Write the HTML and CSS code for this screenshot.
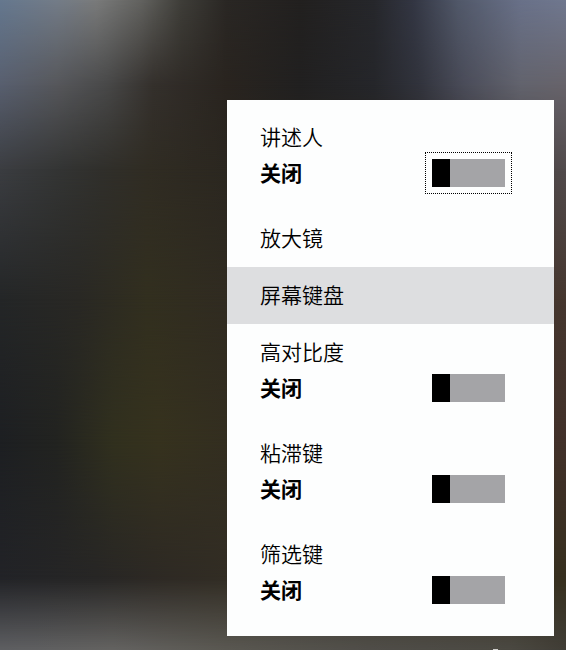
FILE: index.html
```html
<!DOCTYPE html>
<html lang="zh-CN">
<head>
<meta charset="utf-8">
<meta name="viewport" content="width=device-width, initial-scale=1">
<title>轻松使用</title>
<link rel="stylesheet" href="styles.css">
</head>
<body>
<div class="wallpaper" aria-hidden="true">
  <div class="band band-1"></div>
  <div class="band band-2"></div>
  <div class="band band-3"></div>
  <div class="band band-4"></div>
  <div class="band band-5"></div>
  <div class="band band-6"></div>
  <div class="band band-7"></div>
  <div class="glint"></div>
</div>
<main class="panel">
  <div class="option">
    <label class="name" for="narrator">讲述人</label>
    <span class="state">关闭</span>
    <span class="switch-box focused"><input class="switch" type="checkbox" role="switch" id="narrator"></span>
  </div>
  <button class="action" type="button">放大镜</button>
  <button class="action selected" type="button">屏幕键盘</button>
  <div class="option">
    <label class="name" for="contrast">高对比度</label>
    <span class="state">关闭</span>
    <span class="switch-box"><input class="switch" type="checkbox" role="switch" id="contrast"></span>
  </div>
  <div class="option">
    <label class="name" for="sticky">粘滞键</label>
    <span class="state">关闭</span>
    <span class="switch-box"><input class="switch" type="checkbox" role="switch" id="sticky"></span>
  </div>
  <div class="option">
    <label class="name" for="filter">筛选键</label>
    <span class="state">关闭</span>
    <span class="switch-box"><input class="switch" type="checkbox" role="switch" id="filter"></span>
  </div>
</main>
</body>
</html>
```
FILE: styles.css
```css
* {
  box-sizing: border-box;
}

body {
  margin: 0;
  padding: 100px 12px 14px;
  background: #2a2723;
  color: #000;
  font-family: "Noto Sans CJK SC", sans-serif;
  font-size: 21px;
  line-height: 36px;
}

/* Wallpaper: each band fades in over the one above it */
.wallpaper {
  position: fixed;
  inset: 0;
  z-index: -1;
  overflow: hidden;
}

.band {
  position: absolute;
  inset: 0;
}

.band-1 {
  background: linear-gradient(90deg, #65788f 0%, #737c88 10%, #7a7b7b 17%, #62625f 25%, #3f3e39 32%, #2a2724 40%, #22201f 53%, #26272b 66%, #333643 73%, #515869 81%, #697189 92%, #70788f 100%);
}

.band-2 {
  background: linear-gradient(90deg, #585f6f 0%, #56575b 10%, #484848 19%, #34302c 27%, #29241f 40%, #212020 53%, #25262a 66%, #31333c 74%, #4a4c59 82%, #62636d 92%, #67636a 100%);
  mask-image: linear-gradient(transparent 0%, #000 13%);
}

.band-3 {
  background: linear-gradient(90deg, #3b3d41 0%, #333433 11%, #302f2b 18%, #302c23 26%, #2b2720 40%, #28231f 70%, #524b4c 100%);
  mask-image: linear-gradient(transparent 13%, #000 26%);
}

.band-4 {
  background: linear-gradient(90deg, #242627 0%, #292824 14%, #322f1f 26%, #302b21 40%, #3a2f28 80%, #46372f 100%);
  mask-image: linear-gradient(transparent 26%, #000 46%);
}

.band-5 {
  background: linear-gradient(90deg, #1d1f22 0%, #222320 10%, #31301e 20%, #36321e 28%, #332e20 40%, #42312a 100%);
  mask-image: linear-gradient(transparent 46%, #000 68%);
}

.band-6 {
  background: linear-gradient(90deg, #222327 0%, #272625 17%, #2d2924 27%, #322d24 40%, #37301f 100%);
  mask-image: linear-gradient(transparent 68%, #000 89%);
}

.band-7 {
  background: linear-gradient(90deg, #5e5f62 0%, #646361 20%, #5a5852 40%, #504e49 65%, #4b4942 90%, #403d36 100%);
  mask-image: linear-gradient(transparent 89%, #000 100%);
}

.glint {
  position: absolute;
  right: 68px;
  bottom: 0;
  width: 5px;
  height: 1px;
  background: #d0cfcc;
}

.panel {
  width: 100%;
  max-width: 327px;
  margin-left: auto;
  padding: 9px 0;
  background: #fdfefe;
}

.option {
  display: grid;
  grid-template-columns: 1fr auto;
  padding: 9px 42px 20px 33px;
}

.name {
  grid-column: 1 / -1;
  justify-self: start;
  font-weight: 350;
}

.state {
  font-weight: 700;
}

.switch-box {
  display: flex;
  align-self: center;
  margin: -2px 0 -4px;
  padding: 6px;
  border: 1px solid transparent;
}

.focused {
  border: 1px dotted #000;
}

.switch {
  appearance: none;
  width: 73px;
  height: 28px;
  margin: 0;
  outline: 0;
  background: linear-gradient(90deg, #000 18px, #a4a4a7 18px);
}

.switch:checked {
  background: linear-gradient(270deg, #000 18px, #4a6fa8 18px);
}

.action {
  display: block;
  width: 100%;
  height: 57px;
  padding: 0 33px 3px;
  border: 0;
  background: transparent;
  color: inherit;
  font: inherit;
  font-weight: 350;
  text-align: left;
}

.selected {
  background: #dddee0;
}
```
